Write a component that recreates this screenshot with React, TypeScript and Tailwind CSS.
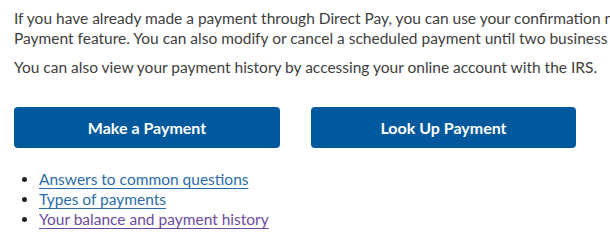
import React from 'react';

const links = [
  { label: 'Answers to common questions', visited: false },
  { label: 'Types of payments', visited: false },
  { label: 'Your balance and payment history', visited: true },
];

export default function App() {
  return (
    <div className="w-[610px] h-[243px] overflow-hidden bg-white font-['Lato',sans-serif] text-[15.5px] leading-[20px] text-[#404040]">
      <div className="pl-[14px] pt-[8px]">
        {/* Intro text, cut off at the right edge like the screenshot */}
        <p className="whitespace-nowrap">
          If you have already made a payment through Direct Pay, you can use your confirmation number to view, modify or cancel it through the Look Up
          <br />
          Payment feature. You can also modify or cancel a scheduled payment until two business days before the scheduled payment date.
        </p>
        <p className="mt-[9px] whitespace-nowrap">
          You can also view your payment history by accessing your online account with the IRS.
        </p>

        {/* Actions */}
        <div className="mt-[30px] flex gap-[31px]">
          <button className="w-[266px] h-[41px] rounded-[4px] bg-[#00599c] text-white font-bold text-[16px]">
            Make a Payment
          </button>
          <button className="w-[265px] h-[41px] rounded-[4px] bg-[#00599c] text-white font-bold text-[16px]">
            Look Up Payment
          </button>
        </div>

        <ul className="mt-[21px] pl-[25px] list-disc marker:text-[#222]">
          {links.map((l) => (
            <li key={l.label}>
              <a
                href="#"
                className={`underline underline-offset-[3px] ${l.visited ? 'text-[#6e4a9e]' : 'text-[#2a6ca8]'}`}
              >
                {l.label}
              </a>
            </li>
          ))}
        </ul>
      </div>
    </div>
  );
}
